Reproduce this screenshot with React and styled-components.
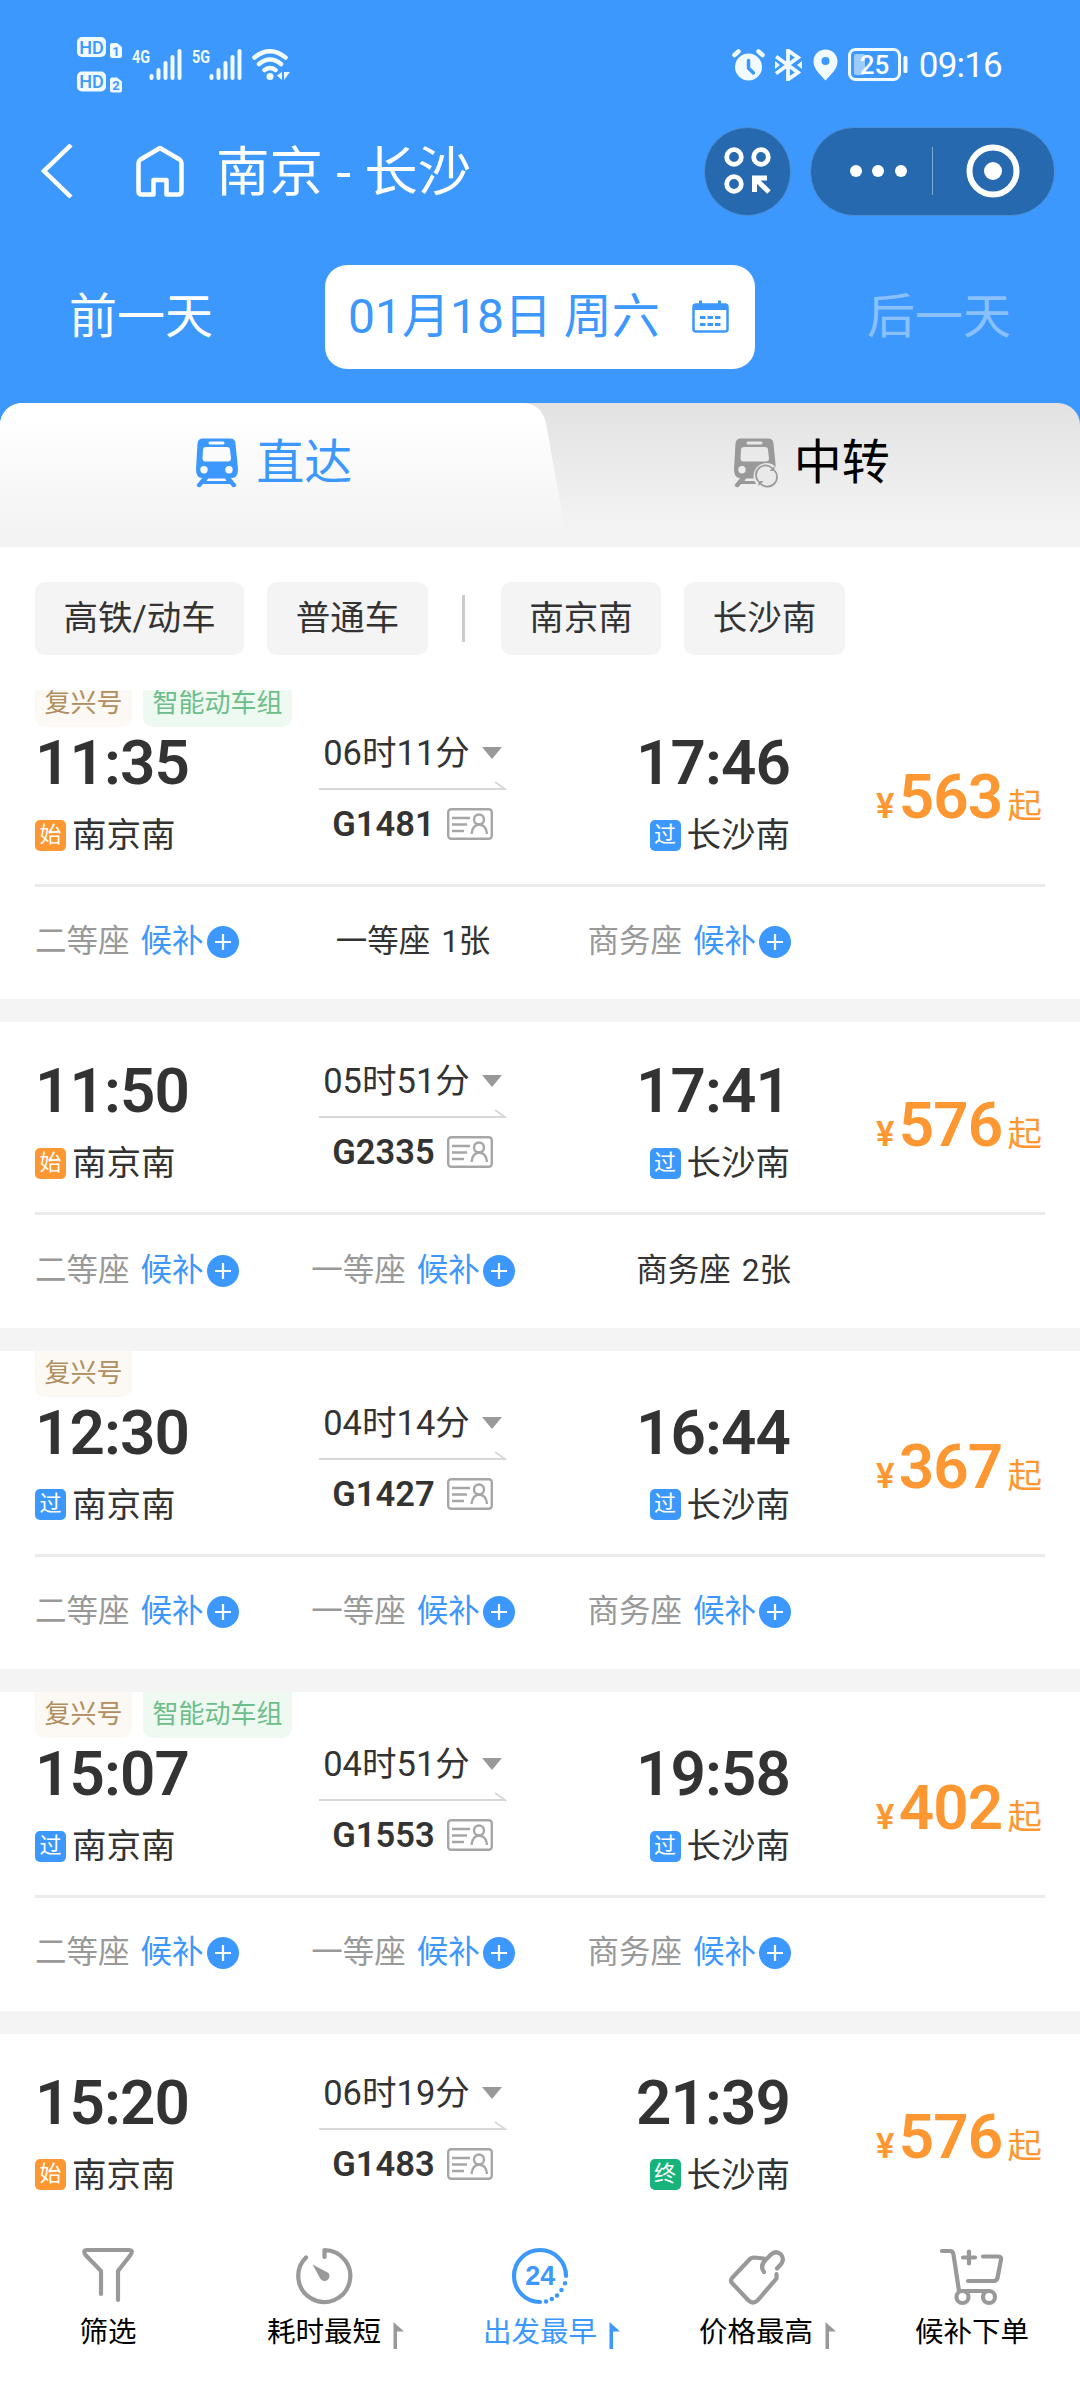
import React, { useState } from "react";
import styled, { createGlobalStyle } from "styled-components";

const BLUE = "#3c98fd";
const ORANGE = "#fd9732";
const GREEN = "#16b37b";

const GlobalStyle = createGlobalStyle`
  * {
    box-sizing: border-box;
  }
  body {
    margin: 0;
    font-family: Roboto, "Noto Sans CJK SC", sans-serif;
    color: #333;
    background: #fff;
  }
  svg {
    display: block;
    flex: none;
  }
`;

const Page = styled.div`
  display: flex;
  flex-direction: column;
  width: 1080px;
  height: 2388px;
  overflow: hidden;
  background: #fff;
`;

const Header = styled.header`
  flex: none;
  background: ${BLUE};
  color: #fff;
`;

const StatusBar = styled.div`
  display: flex;
  align-items: center;
  justify-content: space-between;
  height: 127px;
  padding: 2px 78px 0 77px;
`;

const StatusGroup = styled.div`
  display: flex;
  align-items: center;
  gap: ${props => props.$gap}px;
`;

const Clock = styled.span`
  padding-top: 2px;
  font-size: 35px;
  line-height: 36px;
  letter-spacing: -0.8px;
`;

const NavBar = styled.div`
  display: flex;
  align-items: center;
  height: 88px;
  padding: 0 25px 0 41px;
`;

const HomeLink = styled.a`
  margin-left: 63px;
`;

const Title = styled.h1`
  flex: 1;
  margin: 0 0 0 32px;
  padding-top: 4px;
  font-size: 53.5px;
  font-weight: 400;
  line-height: 84px;
`;

const RoundButton = styled.button`
  display: flex;
  align-items: center;
  justify-content: center;
  width: 87px;
  height: 89px;
  margin-right: 19px;
  padding: 0;
  border: 1px solid #4a8fd8;
  border-radius: 44px;
  background: #2769ae;
`;

const Capsule = styled.div`
  display: flex;
  align-items: center;
  width: 245px;
  height: 89px;
  border: 1px solid #4a8fd8;
  border-radius: 44px;
  background: #2769ae;
`;

const CapsuleHalf = styled.div`
  display: flex;
  align-items: center;
  justify-content: center;
  gap: 10.5px;
  width: 121px;
  height: 48px;
  padding-left: ${props => props.$indent || 0}px;
  & + & {
    border-left: 1px solid #7fa8d2;
  }
`;

const Dot = styled.i`
  width: 12px;
  height: 12px;
  border-radius: 50%;
  background: #fff;
`;

const DateRow = styled.div`
  display: flex;
  align-items: center;
  justify-content: space-between;
  padding: 50px 69px 34px;
`;

const DayLink = styled.span`
  font-size: 48px;
  line-height: 104px;
  opacity: ${props => (props.$disabled ? 0.4 : 1)};
`;

const DatePicker = styled.div`
  display: flex;
  align-items: center;
  justify-content: space-between;
  width: 430px;
  height: 104px;
  padding: 0 26px 0 23px;
  border-radius: 22px;
  background: #fff;
  color: ${BLUE};
  font-size: 48px;
  line-height: 104px;
`;

const Tabs = styled.div`
  background: ${BLUE};
  flex: none;
`;

const TabRow = styled.div`
  position: relative;
  display: flex;
  height: 144px;
  padding-left: 5px;
  border-radius: 22px 22px 0 0;
  background: linear-gradient(#e2e2e2, #f3f3f3 85%);
  overflow: hidden;
  &:before {
    content: "";
    position: absolute;
    inset: 0;
    background: linear-gradient(#fff 10%, #f3f3f3 90%);
    clip-path: path("M0 0H522Q541 0 546 20L568 144H0Z");
  }
`;

const Tab = styled.div`
  position: relative;
  display: flex;
  align-items: center;
  justify-content: center;
  flex: 1;
  height: 120px;
  gap: 16px;
  font-size: 48px;
  line-height: 118px;
  color: ${props => (props.$active ? BLUE : "#000")};
  cursor: pointer;
`;

const Filters = styled.div`
  display: flex;
  align-items: center;
  flex: none;
  height: 143px;
  padding: 0 35px;
`;

const Chip = styled.span`
  padding: 0 28.5px;
  margin-right: 23px;
  border-radius: 10px;
  background: #f4f4f4;
  font-size: 34.5px;
  line-height: 73px;
`;

const FilterDivider = styled.i`
  width: 3px;
  height: 47px;
  margin: 0 36px 0 11px;
  background: #ccc;
`;

const List = styled.main`
  flex: 1;
  min-height: 0;
  overflow: hidden;
  background: #f4f4f4;
`;

const Scroller = styled.div`
  display: flex;
  flex-direction: column;
  gap: 23px;
  margin-top: -9px;
`;

const Card = styled.section`
  position: relative;
  flex: none;
  padding: ${props => (props.$tagged ? 13 : 0)}px 35px 0;
  background: #fff;
`;

const Tags = styled.div`
  position: absolute;
  top: 0;
  left: 35px;
  display: flex;
  gap: 11px;
`;

const Tag = styled.span`
  height: 46px;
  padding: 0 9.5px;
  border-radius: 0 0 10px 10px;
  font-size: 26px;
  line-height: 44px;
  color: ${props => (props.$smart ? "#6dbe8a" : "#b08e5e")};
  background: ${props => (props.$smart ? "#eef9f1" : "#fcf8f3")};
`;

const Trip = styled.div`
  display: flex;
  justify-content: space-between;
  height: 193px;
  border-bottom: 3px solid #ebebeb;
`;

const Route = styled.div`
  display: grid;
  grid-template-columns: 1fr 190px 1fr;
  width: 755px;
`;

const Stop = styled.div`
  display: flex;
  flex-direction: column;
  align-items: ${props => (props.$end ? "flex-end" : "flex-start")};
  padding-top: 39px;
`;

const Time = styled.span`
  font-size: 62px;
  font-weight: 600;
  line-height: 60px;
  letter-spacing: -0.9px;
`;

const Station = styled.span`
  display: flex;
  align-items: center;
  gap: 6px;
  margin-top: 22px;
  font-size: 34.5px;
  line-height: 40px;
`;

const badgeColors = { 始: ORANGE, 过: BLUE, 终: GREEN };

const StationBadge = styled.i`
  width: 31px;
  height: 31px;
  border-radius: 5px;
  background: ${props => badgeColors[props.$kind]};
  color: #fff;
  font-size: 22px;
  font-style: normal;
  line-height: 30px;
  text-align: center;
`;

const Middle = styled.div`
  display: flex;
  flex-direction: column;
  align-items: center;
  padding-top: 37px;
`;

const Duration = styled.span`
  display: flex;
  align-items: center;
  gap: 12px;
  font-size: 34.5px;
  line-height: 44px;
`;

const TrainNo = styled(Duration)`
  gap: 12px;
  margin-top: 12px;
  font-weight: 600;
`;

const Price = styled.div`
  display: flex;
  align-items: baseline;
  padding: 73px 3px 0 0;
  color: ${ORANGE};
  font-size: 62px;
  font-weight: 600;
  line-height: 60px;
  letter-spacing: -0.8px;
`;

const Yen = styled.span`
  font-size: 34.5px;
  margin-right: 5px;
`;

const PriceSuffix = styled.span`
  margin-left: 5px;
  font-size: 34.5px;
  font-weight: 400;
  letter-spacing: 0;
`;

const Seats = styled.div`
  display: grid;
  grid-template-columns: 1fr auto 1fr;
  align-items: center;
  width: 756px;
  height: 112.4px;
  padding-bottom: 2px;
  font-size: 31.5px;
  line-height: 36px;
`;

const Seat = styled.div`
  display: flex;
  align-items: center;
  gap: 11px;
  justify-self: ${props => props.$align};
  color: ${props => (props.$soldOut ? "#999" : "#333")};
`;

const Waitlist = styled.span`
  display: flex;
  align-items: center;
  gap: 3px;
  color: ${BLUE};
`;

const TabBar = styled.nav`
  display: grid;
  grid-template-columns: repeat(5, 1fr);
  flex: none;
  height: 178px;
  padding-top: 35px;
  background: #fff;
`;

const TabBarItem = styled.div`
  display: flex;
  flex-direction: column;
  align-items: center;
  color: ${props => (props.$active ? BLUE : "#000")};
  svg {
    color: ${props => (props.$active ? BLUE : "#999")};
  }
`;

const TabBarLabel = styled.span`
  position: relative;
  margin-top: 6px;
  font-size: 28.5px;
  line-height: 40px;
  svg {
    position: absolute;
    left: calc(100% + 12px);
    top: 9px;
  }
`;

const HdIcon = () => (
  <svg width="46" height="68" viewBox="0 -6 46 68" fontFamily="Roboto">
    {[1, 2].map(n => (
      <g key={n} transform={`translate(0 ${(n - 1) * 34.5})`}>
        <rect width="29" height="20" rx="5" fill="#f0faff" />
        <text x="14.5" y="16.5" fontSize="18" fontWeight="500" textAnchor="middle" fill={BLUE}>HD</text>
        <path d="M33 8q0-2 2-2h5l5 4v9q0 2-2 2h-8q-2 0-2-2z" fill="#f0faff" />
        <text x="39" y="18.5" fontSize="13" fontWeight="700" textAnchor="middle" fill={BLUE}>{n}</text>
      </g>
    ))}
  </svg>
);

const SignalIcon = ({ label }) => (
  <svg width="51" height="44" viewBox="0 -6 51 44" fill="#f0faff">
    <text x="0" y="14" fontSize="19" fontFamily="Roboto" fontWeight="700" textLength="18" lengthAdjust="spacingAndGlyphs">{label}</text>
    <rect x="17.5" y="25" width="4" height="6" rx="2" />
    <rect x="24.5" y="19" width="4" height="12" rx="2" />
    <rect x="31.5" y="12" width="4" height="19" rx="2" />
    <rect x="38.5" y="6" width="4" height="25" rx="2" />
    <rect x="45.5" y="0" width="4" height="31" rx="2" />
  </svg>
);

const WifiIcon = () => (
  <svg width="39" height="32" viewBox="0 0 39 32" fill="none" stroke="#f0faff" strokeWidth="4.5" strokeLinecap="round">
    <path d="M2.500 8.500Q18 -4 33.500 8.500M7 15Q18 6 29 15M12.500 21Q18 17 23.500 21" />
    <circle cx="18" cy="27.5" r="3.5" fill="#f0faff" stroke="none" />
    <path d="M30 23v8l-5-4.500zM32 31v-8h6z" fill="#f0faff" stroke="none" />
  </svg>
);

const AlarmIcon = () => (
  <svg width="33" height="32" viewBox="0 0 33 32" fill="none" strokeLinecap="round">
    <circle cx="16.5" cy="18" r="13.5" fill="#f0faff" />
    <path d="M2.500 6l4-3.500M30.500 6l-4-3.500" stroke="#f0faff" strokeWidth="4.5" />
    <path d="M16.500 11.500v7.500l5 5" stroke={BLUE} strokeWidth="3.5" />
  </svg>
);

const BluetoothIcon = () => (
  <svg width="27" height="32" viewBox="0 0 27 32" fill="none" stroke="#f0faff" strokeWidth="3.8">
    <path d="M1 7.500l22 16-10 7V1.500l10 7-22 16" />
    <path d="M0 12l5 4-5 4zM27 12l-5 4 5 4z" fill="#f0faff" stroke="none" />
  </svg>
);

const PinIcon = () => (
  <svg width="25" height="32" viewBox="0 0 25 32">
    <path fillRule="evenodd" fill="#f0faff" d="M12.500 0.500C5.500 0.500 0.500 5.500 0.500 12.500c0 6.500 5 11.500 12 19 7-7.500 12-12.500 12-19C24.500 5.500 19.500.5 12.500.5zm0 7.500a4 4 0 1 1 0 8 4 4 0 0 1 0-8z" />
  </svg>
);

const BatteryIcon = () => (
  <svg width="60" height="34" viewBox="0 0 60 34">
    <rect x="1.5" y="1.5" width="50" height="30" rx="6" fill="none" stroke="#f0faff" strokeWidth="3" />
    <rect x="6" y="6" width="11" height="21" rx="2" fill="#9dccff" />
    <rect x="55.5" y="8" width="4" height="17" rx="1.5" fill="#f0faff" />
    <text x="26.5" y="25.5" fontSize="26" fontFamily="Roboto" fontWeight="500" textAnchor="middle" fill="#fff">25</text>
  </svg>
);

const BackIcon = () => (
  <svg width="32" height="54" viewBox="0 0 32 54" fill="none" stroke="#fff" strokeWidth="4.5">
    <path d="M30 1L3 27l27 26" />
  </svg>
);

const HomeIcon = () => (
  <svg width="48" height="52" viewBox="0 0 48 52" fill="none" stroke="#fff" strokeWidth="4.5" strokeLinejoin="round">
    <path d="M24 3L4.500 14.500Q2.500 16 2.500 18V46q0 3.500 3.500 3.500H17.500V35h13v14.500H42q3.500 0 3.500-3.500V18q0-2-2-3.500z" />
  </svg>
);

const GridIcon = () => (
  <svg width="47" height="48" viewBox="0 0 47 48" fill="none" stroke="#fff" strokeWidth="4.8">
    <circle cx="10" cy="10" r="7.3" />
    <circle cx="37" cy="10" r="7.3" />
    <circle cx="10" cy="37" r="7.3" />
    <path d="M30.500 45V31H43M31 31.500L45 45" strokeWidth="5" />
  </svg>
);

const TargetIcon = () => (
  <svg width="54" height="54" viewBox="0 0 54 54" fill="none">
    <circle cx="27" cy="27" r="23.5" stroke="#fff" strokeWidth="6" />
    <circle cx="27" cy="27" r="9" fill="#fff" />
  </svg>
);

const CalendarIcon = () => (
  <svg width="37" height="34" viewBox="0 0 37 34" fill="none" stroke={BLUE}>
    <rect x="1.5" y="4.5" width="34" height="27" rx="2.5" strokeWidth="2.5" />
    <path d="M3 4h31q2 0 2 2v4H1V6q0-2 2-2zM7 0.500h3v4H7zM26 0.500h3v4h-3z" fill={BLUE} stroke="none" />
    <path d="M8 17.500h5.500M15.500 17.500H21M23 17.500h5.500M8 24.500h5.500M15.500 24.500H21M23 24.500h5.500" strokeWidth="3" />
  </svg>
);

const TrainIcon = ({ color, transfer }) => (
  <svg width="45" height="50" viewBox="0 0 45 50" fill={color}>
    <path
      fillRule="evenodd"
      d="M8 0.500h27q5 0 5.500 5L43 31q0 9-6 9H7q-6 0-6-9L2.500 5.500q.5-5 5.500-5zM15 3.500q-1.500 0-1.500 1.500t1.500 1.500h13q1.500 0 1.500-1.500T28 3.500zM11 9q-3 0-3 3L7.500 20q0 3.500 3 3.500H33q3 0 3-3.500L35 12q0-3-3-3zM9 28a3.700 3.700 0 1 0 0 7.400A3.700 3.700 0 0 0 9 28zM34 28a3.700 3.700 0 1 0 0 7.400A3.700 3.700 0 0 0 34 28z"
    />
    <path d="M8 39l-6.500 8q1 3 4 2l2.500-3h27l2.500 3q3 1 4-2L35 39zM13 40.500h17l1.500 2.500h-20z" fillRule="evenodd" />
    {transfer && (
      <g fill="none">
        <circle cx="33.5" cy="38" r="13" fill="#e9e9e9" />
        <path d="M25.500 43.500a9.500 9.500 0 0 1 14-13M41.500 32.500a9.500 9.500 0 0 1-14 13" stroke={color} strokeWidth="1.8" />
        <path d="M41.500 28v5h-5zM25.500 48v-5h5z" fill={color} />
      </g>
    )}
  </svg>
);

const CaretIcon = () => (
  <svg width="20" height="12" viewBox="0 0 20 12">
    <path d="M0 0h20L10 12z" fill="#999" />
  </svg>
);

const ArrowLine = styled(({ className }) => (
  <svg className={className} width="188" height="9" viewBox="0 0 188 9" fill="none" stroke="#d8d8d8" strokeWidth="2">
    <path d="M0 8h186l-10-7" />
  </svg>
))`
  margin-top: 6px;
`;

const IdCardIcon = () => (
  <svg width="46" height="32" viewBox="0 0 46 32" fill="none" stroke="#a6a6a6" strokeWidth="2.4">
    <rect x="1.2" y="1.2" width="43.6" height="29.6" rx="3" />
    <path d="M5 10h18M5 16.500h15M5 23h12M24.500 26q1-9 7.500-9.500 7.500.5 8 9.500" />
    <circle cx="32" cy="11.5" r="5" />
  </svg>
);

const PlusIcon = () => (
  <svg width="32" height="32" viewBox="0 0 32 32">
    <circle cx="16" cy="16" r="16" fill={BLUE} />
    <path d="M16 8v16M8 16h16" stroke="#fff" strokeWidth="2.2" />
  </svg>
);

const SortIcon = () => (
  <svg width="12" height="27" viewBox="0 0 12 27" fill="currentColor">
    <path d="M0.500 0L11 9.500H4V27H0.500z" />
  </svg>
);

const Glyph = ({ children }) => (
  <svg width="66" height="62" viewBox="0 0 66 62" fill="none" stroke="currentColor" strokeWidth="4.2" strokeLinecap="round" strokeLinejoin="round">
    {children}
  </svg>
);

const FunnelIcon = () => (
  <Glyph>
    <path d="M26 49V26L10.500 10Q7.500 5 12 5H54q4.500 0 1.500 5L43 26V55" />
  </Glyph>
);

const TimerIcon = () => (
  <Glyph>
    <path d="M33.500 12V5A26 26 0 1 1 15 12.500" />
    <path d="M21.500 19.500L37.500 28A4.800 4.800 0 1 1 29.500 34z" fill="currentColor" stroke="none" />
  </Glyph>
);

const Clock24Icon = () => (
  <Glyph>
    <path d="M33 57A26 26 0 1 1 59 31" />
    <path d="M58 38.300l.01 0M54.500 45l.01 0M50 50.500l.01 0M44.800 54l.01 0M39 56.500l.01 0" strokeWidth="4.5" />
    <text x="33.2" y="40.2" fontSize="27" fontFamily="Liberation Sans" fontWeight="700" textAnchor="middle" fill="currentColor" stroke="none">24</text>
  </Glyph>
);

const PriceTagIcon = () => (
  <Glyph>
    <path d="M53.500 29V33.500L34.500 55.500Q30 59.500 25.500 55.500L9.500 38.500Q6.500 35.500 9.500 32.500L26 15Q28 12.500 31 12.500L41 13.500" />
    <path d="M41 27Q36.500 21 42.500 15L48 9.500Q53 5 58 9.500 61.500 14 58.500 18.500L54 23.500" />
  </Glyph>
);

const CartIcon = () => (
  <Glyph>
    <path d="M3 6h8q3 0 3.500 3.500L20 46H49M44 11.500H59q3.500 0 3 3L58.500 33q-1 3-4 3H29M30 6.500v12M24 12.500h12" />
    <circle cx="23.5" cy="52" r="6" />
    <circle cx="50" cy="52" r="6" />
  </Glyph>
);

const sorts = [
  { label: "筛选", icon: FunnelIcon },
  { label: "耗时最短", icon: TimerIcon, sortable: true },
  { label: "出发最早", icon: Clock24Icon, sortable: true },
  { label: "价格最高", icon: PriceTagIcon, sortable: true },
  { label: "候补下单", icon: CartIcon }
];

const trains = [
  {
    no: "G1481",
    tags: ["复兴号", "智能动车组"],
    from: ["11:35", "始"],
    to: ["17:46", "过"],
    duration: "06时11分",
    price: 563,
    seats: [null, "1张", null]
  },
  {
    no: "G2335",
    tags: [],
    from: ["11:50", "始"],
    to: ["17:41", "过"],
    duration: "05时51分",
    price: 576,
    seats: [null, null, "2张"]
  },
  {
    no: "G1427",
    tags: ["复兴号"],
    from: ["12:30", "过"],
    to: ["16:44", "过"],
    duration: "04时14分",
    price: 367,
    seats: [null, null, null]
  },
  {
    no: "G1553",
    tags: ["复兴号", "智能动车组"],
    from: ["15:07", "过"],
    to: ["19:58", "过"],
    duration: "04时51分",
    price: 402,
    seats: [null, null, null]
  },
  {
    no: "G1483",
    tags: [],
    from: ["15:20", "始"],
    to: ["21:39", "终"],
    duration: "06时19分",
    price: 576
  }
];

const seatNames = ["二等座", "一等座", "商务座"];
const seatAlign = ["start", "center", "end"];

const TrainCard = ({ train }) => (
  <Card $tagged={train.tags.length > 0}>
    <Tags>
      {train.tags.map(tag => (
        <Tag key={tag} $smart={tag === "智能动车组"}>
          {tag}
        </Tag>
      ))}
    </Tags>
    <Trip>
      <Route>
        <Stop>
          <Time>{train.from[0]}</Time>
          <Station>
            <StationBadge $kind={train.from[1]}>{train.from[1]}</StationBadge>
            南京南
          </Station>
        </Stop>
        <Middle>
          <Duration>
            {train.duration}
            <CaretIcon />
          </Duration>
          <ArrowLine />
          <TrainNo>
            {train.no}
            <IdCardIcon />
          </TrainNo>
        </Middle>
        <Stop $end>
          <Time>{train.to[0]}</Time>
          <Station>
            <StationBadge $kind={train.to[1]}>{train.to[1]}</StationBadge>
            长沙南
          </Station>
        </Stop>
      </Route>
      <Price>
        <Yen>¥</Yen>
        {train.price}
        <PriceSuffix>起</PriceSuffix>
      </Price>
    </Trip>
    {train.seats && (
      <Seats>
        {train.seats.map((left, i) => (
          <Seat key={seatNames[i]} $align={seatAlign[i]} $soldOut={!left}>
            {seatNames[i]}
            {left ? (
              <span>{left}</span>
            ) : (
              <Waitlist>
                候补
                <PlusIcon />
              </Waitlist>
            )}
          </Seat>
        ))}
      </Seats>
    )}
  </Card>
);

export default function App() {
  const [direct, setDirect] = useState(true);

  return (
    <Page>
      <GlobalStyle />
      <Header>
        <StatusBar>
          <StatusGroup $gap={9}>
            <HdIcon />
            <SignalIcon label="4G" />
            <SignalIcon label="5G" />
            <WifiIcon />
          </StatusGroup>
          <StatusGroup $gap={10.5}>
            <AlarmIcon />
            <BluetoothIcon />
            <PinIcon />
            <BatteryIcon />
            <Clock>09:16</Clock>
          </StatusGroup>
        </StatusBar>
        <NavBar>
          <BackIcon />
          <HomeLink>
            <HomeIcon />
          </HomeLink>
          <Title>南京 - 长沙</Title>
          <RoundButton>
            <GridIcon />
          </RoundButton>
          <Capsule>
            <CapsuleHalf $indent={13}>
              <Dot />
              <Dot />
              <Dot />
            </CapsuleHalf>
            <CapsuleHalf>
              <TargetIcon />
            </CapsuleHalf>
          </Capsule>
        </NavBar>
        <DateRow>
          <DayLink>前一天</DayLink>
          <DatePicker>
            01月18日 周六
            <CalendarIcon />
          </DatePicker>
          <DayLink $disabled>后一天</DayLink>
        </DateRow>
      </Header>
      <Tabs>
        <TabRow>
          <Tab $active={direct} onClick={() => setDirect(true)}>
            <TrainIcon color={BLUE} />
            直达
          </Tab>
          <Tab $active={!direct} onClick={() => setDirect(false)}>
            <TrainIcon color="#999" transfer />
            中转
          </Tab>
        </TabRow>
      </Tabs>
      <Filters>
        <Chip>高铁/动车</Chip>
        <Chip>普通车</Chip>
        <FilterDivider />
        <Chip>南京南</Chip>
        <Chip>长沙南</Chip>
      </Filters>
      <List>
        <Scroller>
          {trains.map(train => (
            <TrainCard key={train.no} train={train} />
          ))}
        </Scroller>
      </List>
      <TabBar>
        {sorts.map(({ label, icon: Icon, sortable }) => (
          <TabBarItem key={label} $active={label === "出发最早"}>
            <Icon />
            <TabBarLabel>
              {label}
              {sortable && <SortIcon />}
            </TabBarLabel>
          </TabBarItem>
        ))}
      </TabBar>
    </Page>
  );
}
